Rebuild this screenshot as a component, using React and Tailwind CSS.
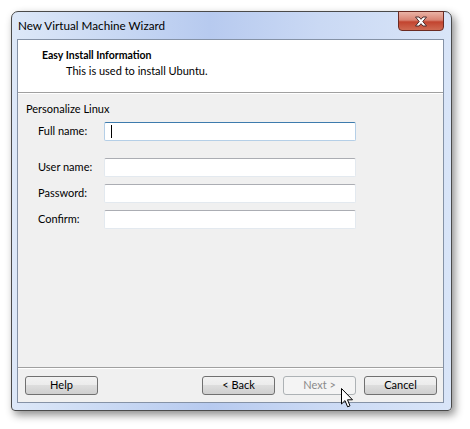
import React from "react";

const font = { fontFamily: 'Lato, "Open Sans", sans-serif' };

function Field({ label, focused }) {
  return (
    <div className="flex items-center h-[19px]">
      <span className="w-[66px] text-[11px] text-black">{label}</span>
      <div
        className={
          "w-[252px] h-[19px] bg-white rounded-[2px] border flex items-center pl-[6px] " +
          (focused
            ? "border-[#b5cfe7] border-t-[#3d7bad]"
            : "border-[#e3e9ef] border-t-[#abadb3]")
        }
      >
        {focused && <div className="w-px h-[13px] bg-black" />}
      </div>
    </div>
  );
}

function Button({ children, disabled }) {
  return (
    <div
      className={
        "w-[73px] h-[19px] rounded-[3px] border flex items-center justify-center text-[11px] " +
        (disabled
          ? "border-[#adb2b5] bg-[#f4f4f4] text-[#8a8a8a]"
          : "border-[#707070] bg-[linear-gradient(#f2f2f2_0%,#ebebeb_50%,#dddddd_50%,#cfcfcf_100%)] text-black")
      }
    >
      {children}
    </div>
  );
}

export default function App() {
  return (
    <div className="w-[470px] h-[429px] bg-white pl-[11px] pt-[11px] relative" style={font}>
      {/* window frame */}
      <div className="relative w-[441px] h-[400px] rounded-t-[7px] rounded-b-[4px] border border-[#4a4a4a] bg-[linear-gradient(to_right,#dde8f8_0%,#c3d4f2_30%,#b7caef_45%,#cad9f4_70%,#d9e5f8_100%)] shadow-[3px_4px_9px_rgba(0,0,0,0.45)] flex flex-col">
        {/* title bar */}
        <div className="h-[27px] flex items-center pl-[6px] relative">
          <span className="text-[11.7px] text-black">New Virtual Machine Wizard</span>
          <div className="absolute right-[7px] top-[-1px] w-[46px] h-[20px] rounded-b-[4px] border border-[#6b2a22] bg-[linear-gradient(#eab3a6_0%,#d98372_45%,#c2442f_55%,#cf6a52_100%)] flex items-center justify-center">
            <svg width="14" height="11" viewBox="0 0 14 11">
              <path
                d="M1.5 1 L5 1 L7 3.3 L9 1 L12.5 1 L8.8 5.5 L12.5 10 L9 10 L7 7.7 L5 10 L1.5 10 L5.2 5.5 Z"
                fill="#ffffff"
                stroke="#4a2a2a"
                strokeWidth="1"
                strokeLinejoin="round"
              />
            </svg>
          </div>
        </div>
        {/* client area */}
        <div className="ml-[5px] mr-[7px] w-[427px] h-[364px] border border-[#8592a6] bg-[#f0f0f0] flex flex-col">
          <div className="h-[52px] bg-white flex flex-col pt-[7px]">
            <div className="pl-[24px] text-[10.5px] font-bold text-black leading-[16px]">Easy Install Information</div>
            <div className="pl-[48px] text-[11px] text-black leading-[16px]">This is used to install Ubuntu.</div>
          </div>
          <div className="h-px bg-[#a0a0a0]" />
          <div className="h-px bg-white" />
          <div className="flex-1 flex flex-col pl-[8px] pt-[7px]">
            <div className="text-[11px] text-black leading-[15px]">Personalize Linux</div>
            <div className="pl-[12px] pt-[6px] flex flex-col">
              <Field label="Full name:" focused />
              <div className="h-[17px]" />
              <div className="flex flex-col gap-[7px]">
                <Field label="User name:" />
                <Field label="Password:" />
                <Field label="Confirm:" />
              </div>
            </div>
          </div>
          <div className="h-px bg-[#a0a0a0]" />
          <div className="h-px bg-white" />
          <div className="h-[33px] flex items-start pt-[7px] pl-[7px] pr-[6px]">
            <Button>Help</Button>
            <div className="flex-1" />
            <div className="flex gap-[8px]">
              <Button>&lt; Back</Button>
              <Button disabled>Next &gt;</Button>
              <Button>Cancel</Button>
            </div>
          </div>
        </div>
      </div>
      {/* mouse cursor */}
      <svg className="absolute left-[341px] top-[388px]" width="13" height="21" viewBox="0 0 13 21">
        <path
          d="M0.5 0.5 L0.5 16 L4 12.6 L6.6 18.8 L9 17.8 L6.5 11.8 L11.5 11.8 Z"
          fill="#ffffff"
          stroke="#000000"
          strokeWidth="1"
          strokeLinejoin="miter"
        />
      </svg>
    </div>
  );
}
